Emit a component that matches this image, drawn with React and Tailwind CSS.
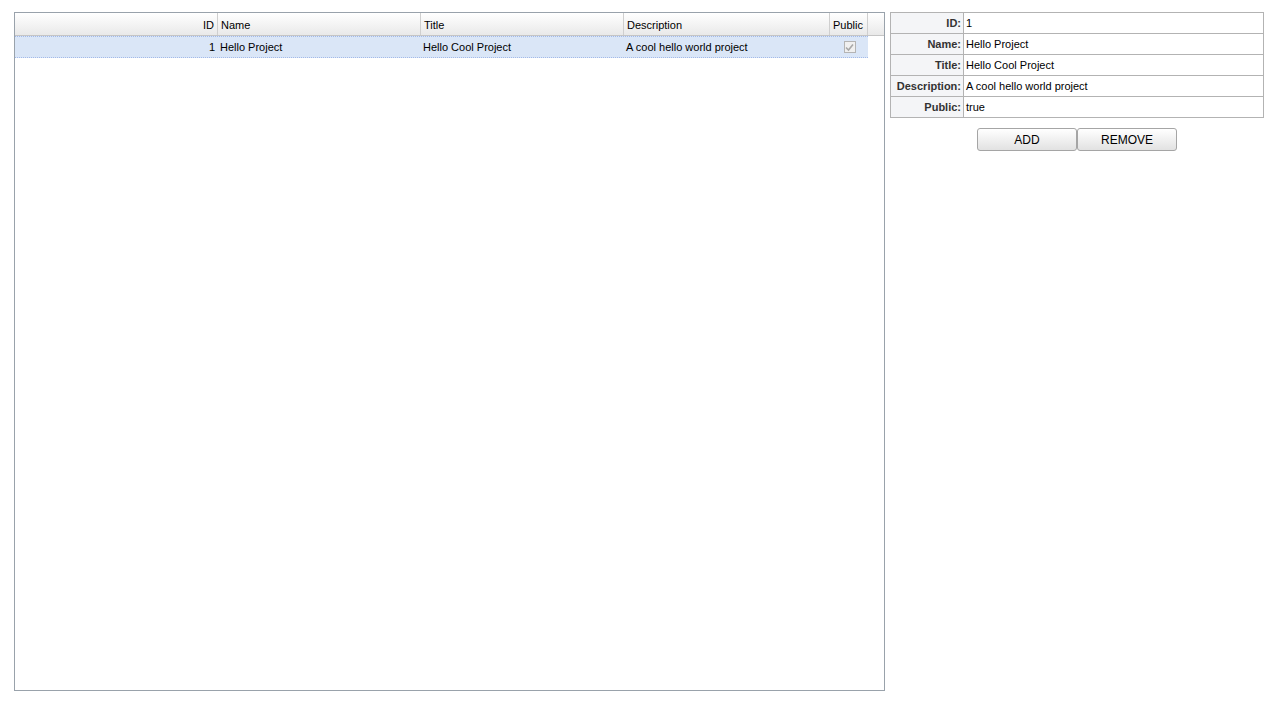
const columns = [
  { key: 'id', label: 'ID', width: 'w-[203px]', align: 'text-right' },
  { key: 'name', label: 'Name', width: 'w-[203px]', align: 'text-left' },
  { key: 'title', label: 'Title', width: 'w-[203px]', align: 'text-left' },
  { key: 'description', label: 'Description', width: 'w-[206px]', align: 'text-left' },
  { key: 'public', label: 'Public', width: 'w-[38px]', align: 'text-left' },
];

const projects = [
  { id: 1, name: 'Hello Project', title: 'Hello Cool Project', description: 'A cool hello world project', public: true },
];

function Checkbox({ checked }) {
  return (
    <span className="flex h-[12px] w-[12px] items-center justify-center border border-[#b4b4b4] bg-[#f0f0f0]">
      {checked && (
        <svg width="9" height="9" viewBox="0 0 9 9">
          <path d="M1 4.5 L3.5 7 L8 1.5" fill="none" stroke="#a8a8a8" strokeWidth="1.6" />
        </svg>
      )}
    </span>
  );
}

function Grid() {
  return (
    <div className="flex h-[679px] w-[871px] flex-col border border-[#99a2ab] bg-white">
      <div className="flex h-[23px] border-b border-[#c5c5c5] bg-gradient-to-b from-white to-[#e9e9e9]">
        {columns.map((c) => (
          <div
            key={c.key}
            className={`${c.width} ${c.align} flex-none border-r border-[#cfcfcf] px-[3px] pt-[6px] leading-[13px]`}
          >
            {c.label}
          </div>
        ))}
        <div className="flex-1" />
      </div>
      {projects.map((p) => (
        <div
          key={p.id}
          className="flex h-[22px] w-[853px] border-y border-dotted border-[#a3bae9] bg-[#dae6f7]"
        >
          <div className="w-[203px] flex-none px-[3px] pt-[4px] text-right leading-[13px]">{p.id}</div>
          <div className="w-[203px] flex-none px-[2px] pt-[4px] leading-[13px]">{p.name}</div>
          <div className="w-[203px] flex-none px-[2px] pt-[4px] leading-[13px]">{p.title}</div>
          <div className="w-[206px] flex-none px-[2px] pt-[4px] leading-[13px]">{p.description}</div>
          <div className="flex w-[38px] flex-none items-center justify-center pl-[1px]">
            <Checkbox checked={p.public} />
          </div>
        </div>
      ))}
    </div>
  );
}

function Details({ project }) {
  const rows = [
    ['ID:', project.id],
    ['Name:', project.name],
    ['Title:', project.title],
    ['Description:', project.description],
    ['Public:', String(project.public)],
  ];
  return (
    <table className="w-[374px] border-collapse">
      <tbody>
        {rows.map(([label, value]) => (
          <tr key={label} className="h-[21px]">
            <td className="w-[73px] border border-[#b3b3b3] bg-[#f4f5f7] px-[2px] text-right font-bold leading-[13px] text-[#333]">
              {label}
            </td>
            <td className="border border-[#b3b3b3] px-[2px] leading-[13px]">{value}</td>
          </tr>
        ))}
      </tbody>
    </table>
  );
}

function Button({ children }) {
  return (
    <button className="h-[23px] w-[100px] rounded-[3px] border border-[#a5a5a5] bg-gradient-to-b from-white to-[#e2e2e2] text-[12px] leading-[14px] text-black">
      {children}
    </button>
  );
}

export default function App() {
  return (
    <div
      className="flex h-[701px] items-start bg-white pl-[14px] pt-[12px] text-[11px] text-black"
      style={{ fontFamily: '"Liberation Sans", Tahoma, sans-serif', fontSize: '11px' }}
    >
      <Grid />
      <div className="ml-[5px] flex flex-col items-center">
        <Details project={projects[0]} />
        <div className="mt-[10px] flex">
          <Button>ADD</Button>
          <Button>REMOVE</Button>
        </div>
      </div>
    </div>
  );
}
